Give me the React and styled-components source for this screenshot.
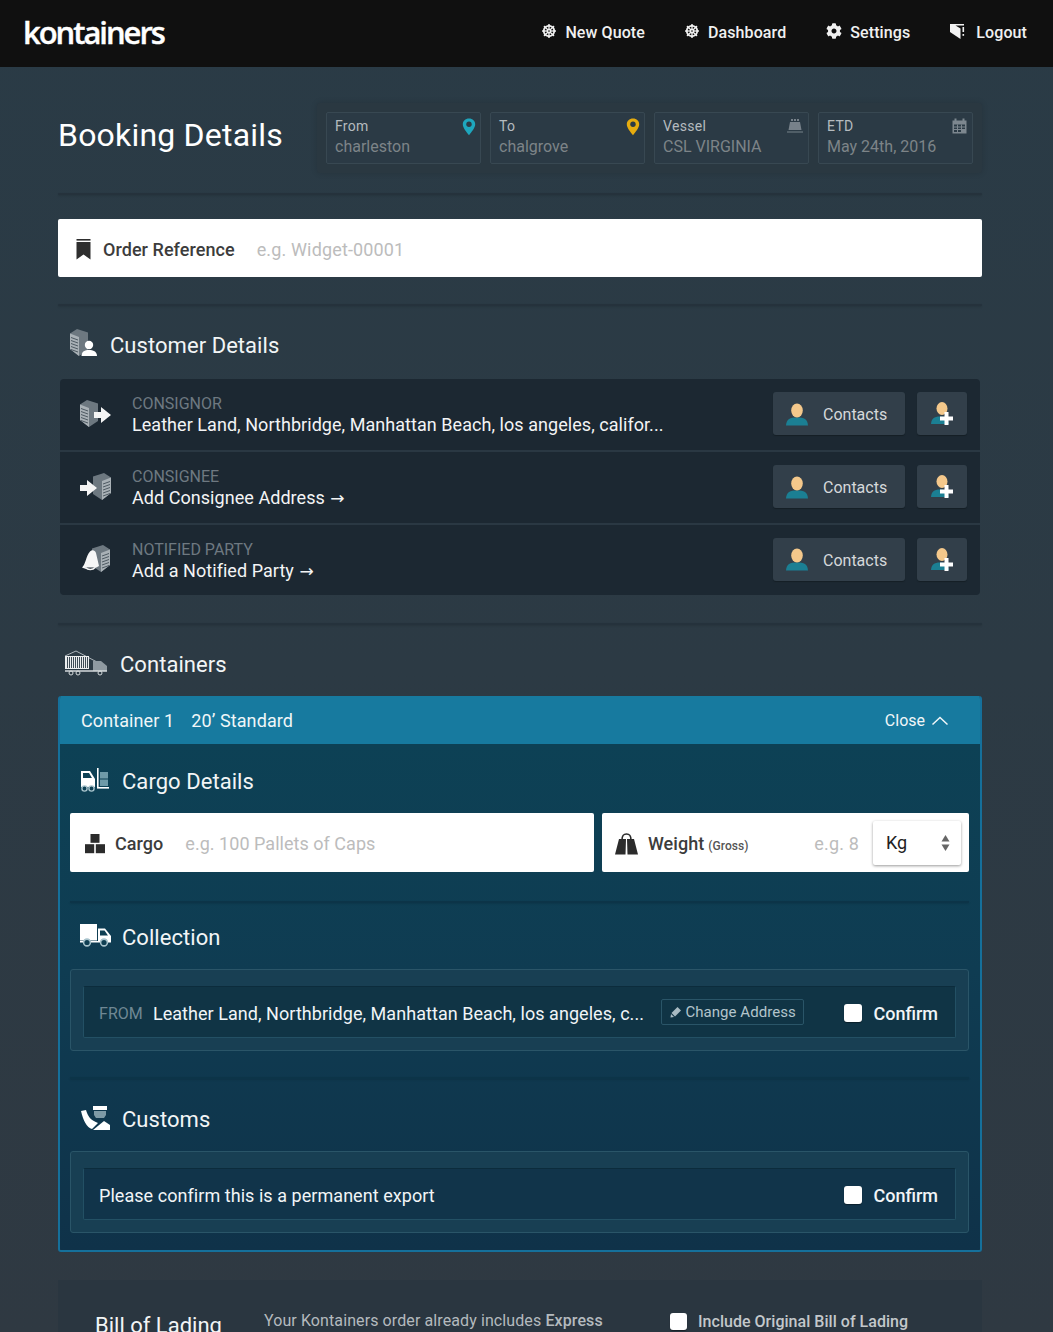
import React from "react";
import styled, { createGlobalStyle } from "styled-components";
import { FaDharmachakra, FaCog } from "react-icons/fa";

const GlobalStyle = createGlobalStyle`
    html, body {
        margin: 0;
        padding: 0;
        height: 100%;
        overflow: hidden;
        background: #2c3a44;
    }
    * {
        box-sizing: border-box;
    }
`

const Page = styled.div`
    width: 1053px;
    height: 1332px;
    overflow: hidden;
    font-family: Roboto, "Liberation Sans", sans-serif;
    background: linear-gradient(180deg, #2a3b46 0%, #2c3a44 50%, #2f3942 100%);
    color: #fff;
`

const TopBar = styled.header`
    height: 67px;
    background: #101010;
    display: flex;
    align-items: center;
    justify-content: space-between;
    padding: 0 26px 3px 23px;
`

const Logo = styled.div`
    font-family: "Open Sans", sans-serif;
    font-size: 31px;
    font-weight: 600;
    letter-spacing: -2.05px;
    color: #fff;
    -webkit-text-stroke: 0.4px #fff;
`

const Nav = styled.nav`
    display: flex;
    gap: 40px;
`

const NavItem = styled.a`
    display: flex;
    align-items: center;
    gap: ${(p) => p.$gap || 9}px;
    font-size: 16px;
    font-weight: 500;
    letter-spacing: 0.1px;
    color: #f0f0f0;
    svg {
        display: block;
        margin-top: -2px;
    }
`

const Main = styled.main`
    padding: 0 71px 0 58px;
`

const Divider = styled.div`
    height: 2px;
    background: #25323c;
    box-shadow: 0 1px 2px rgba(0, 0, 0, 0.12);
    border-radius: 2px;
`

const BookingHead = styled.section`
    height: 126px;
    display: flex;
    align-items: center;
    justify-content: space-between;
    padding-top: 9px;
`

const PageTitle = styled.h1`
    margin: 0;
    font-size: 32px;
    font-weight: 400;
    letter-spacing: 0.2px;
    color: #fff;
`

const SummaryTray = styled.div`
    display: flex;
    gap: 9px;
    padding: 9px;
    margin-top: 6px;
    background: #2a3841;
    border-radius: 3px;
    box-shadow: 0 0 6px rgba(0, 0, 0, 0.14);
`

const SummaryField = styled.div`
    position: relative;
    width: 155px;
    height: 52px;
    padding: 5px 8px;
    background: #2b3a45;
    border: 1px solid #384852;
    border-radius: 2px;
`

const SummaryLabel = styled.div`
    font-size: 14px;
    line-height: 16px;
    letter-spacing: 0.3px;
    color: #b5bbbf;
`

const SummaryValue = styled.div`
    margin-top: 2px;
    font-size: 16px;
    line-height: 22px;
    color: #7d8488;
`

const SummaryIcon = styled.span`
    position: absolute;
    top: 5px;
    right: ${(p) => p.$right}px;
    display: block;
    line-height: 0;
`

const WhiteField = styled.div`
    flex: ${(p) => p.$flex || "none"};
    width: ${(p) => (p.$w ? `${p.$w}px` : "auto")};
    height: ${(p) => p.$h || 59}px;
    background: #fff;
    border-radius: 2px;
    display: flex;
    align-items: center;
    padding: 2px ${(p) => p.$pr || 0}px 0 ${(p) => p.$pl || 15}px;
    color: #3a3a3a;
`

const FieldLabel = styled.span`
    margin-left: ${(p) => p.$ml || 10}px;
    font-size: 18px;
    font-weight: 500;
    letter-spacing: 0.05px;
    color: #3c3c3c;
    white-space: nowrap;
    small {
        font-size: 12px;
        margin-left: 4px;
        color: #555;
    }
`

const Placeholder = styled.span`
    margin-left: ${(p) => p.$ml || 22}px;
    font-size: 18px;
    letter-spacing: ${(p) => p.$ls || 0.15}px;
    color: #bcbcbc;
    white-space: nowrap;
`

const SectionHead = styled.div`
    display: flex;
    align-items: center;
    height: ${(p) => p.$h}px;
    padding: ${(p) => p.$pt || 0}px 0 0 ${(p) => p.$pl || 10}px;
`

const SectionTitle = styled.h2`
    margin: 0 0 0 ${(p) => p.$ml || 13}px;
    padding-top: 4px;
    font-size: 22px;
    font-weight: 400;
    letter-spacing: 0.05px;
    color: #f2f5f6;
`

const PartyPanel = styled.div`
    margin: 0 2px;
    background: #1c2832;
    border-radius: 4px;
    overflow: hidden;
`

const PartyText = styled.div`
    flex: 1;
    margin-left: 18px;
    min-width: 0;
`

const PartyRow = styled.div`
    height: 71px;
    display: flex;
    align-items: center;
    padding: 0 13px 0 18px;
    & + & {
        height: 73px;
        border-top: 2px solid #2a3843;
    }
    &:last-child {
        height: 72px;
    }
    &:last-child ${PartyText} {
        padding-top: 2px;
    }
`

const PartyIcon = styled.span`
    width: 36px;
    display: flex;
    justify-content: center;
    flex: none;
`

const PartyLabel = styled.div`
    font-size: 16px;
    line-height: 20px;
    color: #6e7981;
`

const PartyValue = styled.div`
    font-size: 18px;
    line-height: 22px;
    letter-spacing: 0.05px;
    color: #f3f4f5;
    white-space: nowrap;
`

const ArrowGlyph = styled.span`
    font-family: "DejaVu Sans", sans-serif;
    font-size: 17px;
`

const ContactButton = styled.button`
    width: 132px;
    height: 43px;
    margin-top: -2px;
    padding: 0 0 0 12px;
    background: #323f4a;
    border: none;
    border-radius: 3px;
    display: flex;
    align-items: center;
    gap: 14px;
    font-family: inherit;
    font-size: 16px;
    color: #d5d8da;
    box-shadow: 0 1px 1px rgba(0, 0, 0, 0.25);
`

const ContactLabel = styled.span`
    padding-top: 2px;
`

const AddButton = styled(ContactButton)`
    width: 50px;
    margin-left: 12px;
    padding: 0 0 0 13px;
`

const ContainerCard = styled.section`
    border-radius: 3px;
    overflow: hidden;
    border: 2px solid #15709b;
    border-top: none;
`

const ContainerBar = styled.div`
    height: 48px;
    margin: 0 -2px;
    background: #177a9f;
    display: flex;
    align-items: center;
    justify-content: space-between;
    padding: 0 33px 0 23px;
    font-size: 18px;
    letter-spacing: 0.1px;
    color: #f0f6f8;
`

const BarTitle = styled.div`
    display: flex;
    gap: 17px;
`

const CloseLink = styled.div`
    display: flex;
    align-items: center;
    gap: 6px;
    font-size: 16px;
    letter-spacing: 0;
`

const ContainerBody = styled.div`
    height: 506px;
    padding: 0 11px 0 10px;
    background: linear-gradient(180deg, #0d4155 0%, #0f3c52 45%, #0f3249 100%);
`

const FieldRow = styled.div`
    display: flex;
    gap: 8px;
`

const UnitSelect = styled.div`
    width: 88px;
    height: 44px;
    margin: -2px 0 0 14px;
    padding: 0 11px 0 13px;
    display: flex;
    align-items: center;
    justify-content: space-between;
    background: #fff;
    border-radius: 2px;
    box-shadow: 0 1px 3px rgba(0, 0, 0, 0.4);
    font-size: 18px;
    color: #222;
`

const InnerDivider = styled.div`
    height: 2px;
    margin-top: ${(p) => p.$mt}px;
    background: #0c3448;
    box-shadow: 0 1px 2px rgba(0, 0, 0, 0.12);
`

const ConfirmBox = styled.div`
    height: 82px;
    margin-top: 1px;
    padding: 16px 12px 12px;
    background: #183f53;
    border: 1px solid #2a5568;
    border-radius: 3px;
`

const ConfirmInner = styled.div`
    height: 52px;
    display: flex;
    align-items: center;
    padding: 2px 17px 0 15px;
    background: ${(p) => p.$bg || "#103445"};
    border: 1px solid #235064;
    border-top-color: #0c2c3c;
    border-radius: 2px;
    font-size: 18px;
    letter-spacing: 0.05px;
    color: #f1f5f7;
    white-space: nowrap;
`

const FromTag = styled.span`
    font-size: 16px;
    color: #6f8894;
    margin-right: 10px;
`

const Grow = styled.span`
    flex: 1;
`

const ChangeButton = styled.span`
    width: 143px;
    height: 26px;
    margin: -2px 40px 0 0;
    display: flex;
    align-items: center;
    gap: 3px;
    padding-left: 8px;
    font-size: 15px;
    letter-spacing: 0.05px;
    color: #b3c4cc;
    border: 1px solid #2a5568;
    border-radius: 2px;
`

const CheckBox = styled.span`
    display: block;
    flex: none;
    width: ${(p) => p.$size || 18}px;
    height: ${(p) => p.$size || 18}px;
    background: #fff;
    border-radius: 3px;
    box-shadow: 0 1px 1px rgba(0, 0, 0, 0.4);
`

const ConfirmLabel = styled.span`
    margin-left: 11px;
    font-weight: 500;
    font-size: 18px;
    letter-spacing: 0;
`

const BillPanel = styled.section`
    height: 60px;
    margin-top: 28px;
    padding: 29px 0 0 37px;
    display: flex;
    align-items: flex-start;
    background: #2a3640;
`

const BillTitle = styled.h3`
    width: 169px;
    margin: 4px 0 0;
    font-size: 22px;
    font-weight: 400;
    color: #f2f4f5;
`

const BillText = styled.div`
    width: 406px;
    font-size: 16px;
    line-height: 24px;
    letter-spacing: 0.1px;
    color: #b4babe;
    b {
        font-weight: 500;
    }
`

const BillOption = styled.div`
    display: flex;
    align-items: center;
    gap: 11px;
    height: 24px;
    font-size: 16px;
    font-weight: 500;
    letter-spacing: 0.03px;
    color: #c3c8cb;
`

const OrderWrap = styled.div`
    padding: 24px 0 27px;
`

const SectionGap = styled.div`
    height: 28px;
`

const Pin = ({ color, dot }) => (
  <svg width="14" height="18" viewBox="0 0 14 18">
    <path d="M7 0.5C3.3 0.5 0.8 3 0.8 6.3 0.8 10 4.6 14 7 17.3 9.4 14 13.2 10 13.2 6.3 13.2 3 10.7 0.5 7 0.5Z" fill={color} />
    <circle cx="7" cy="6.2" r="2.7" fill={dot} />
  </svg>
);

const ShipIcon = () => (
  <svg width="16" height="16" viewBox="0 0 16 16" fill="#77818a">
    <rect x="4" y="1" width="2" height="2" />
    <rect x="7" y="1" width="2" height="2" />
    <rect x="10" y="1" width="2" height="2" />
    <path d="M3 4H13L14.5 12H1.5Z" />
    <rect x="0" y="13.5" width="16" height="1" />
  </svg>
);

const CalendarIcon = () => (
  <svg width="15" height="16" viewBox="0 0 15 16" fill="none">
    <path d="M0.5 2.5H14.5V15.5H0.5Z" fill="#7d878f" />
    <rect x="2.5" y="0.5" width="2" height="3" fill="#7d878f" />
    <rect x="10.5" y="0.5" width="2" height="3" fill="#7d878f" />
    <path d="M2 6.5H13V14H2Z" fill="#2b3a45" />
    <path d="M2 9H13M2 11.5H13M5.5 6.5V14M9.5 6.5V14" stroke="#7d878f" strokeWidth="1" />
    <rect x="10" y="12" width="3" height="2" fill="#7d878f" />
  </svg>
);

const LogoutIcon = () => (
  <svg width="15" height="16" viewBox="0 0 15 16">
    <path d="M0 1H14V2.5H5.5L10.5 5.5V16L0 9Z" fill="#f2f2f2" />
    <rect x="12.5" y="4" width="1.6" height="5" fill="#f2f2f2" />
    <rect x="12.5" y="11" width="1.6" height="1.8" fill="#f2f2f2" />
  </svg>
);

const BookmarkIcon = () => (
  <svg width="15" height="21" viewBox="0 0 15 21" fill="#2e2e2e">
    <rect x="0.5" y="0" width="14" height="1.6" />
    <path d="M0.5 3H14.5V20.5L7.5 15.5 0.5 20.5Z" />
  </svg>
);

// isometric office block shared by the customer icons
const Tower = ({ x = 0, y = 0, flip }) => (
  <g transform={`translate(${x} ${y})${flip ? " translate(18 0) scale(-1 1)" : ""}`}>
    <path d="M0 4.5 7 0 18 3.5V21L9 27 0 20Z" fill="#6d7880" />
    <path d="M0 4.5 9 8V27L0 20Z" fill="#a9b1b6" />
    <path d="M1 8.5 8 11M1 11.5 8 14M1 14.5 8 17M1 17.5 8 20M1 20.5 8 23" stroke="#4d5962" strokeWidth="1" />
  </g>
);

const CustomerIcon = () => (
  <svg width="28" height="30" viewBox="0 0 28 30">
    <Tower />
    <circle cx="19" cy="16" r="4.2" fill="#fff" />
    <path d="M11.5 27C11.5 22.5 15 21 19 21S27 22.5 27 27Z" fill="#fff" />
  </svg>
);

const ConsignorIcon = () => (
  <svg width="32" height="30" viewBox="0 0 32 30">
    <Tower />
    <path d="M14 12H21V7L31 15 21 23V18H14Z" fill="#f4f4f4" />
  </svg>
);

const ConsigneeIcon = () => (
  <svg width="32" height="30" viewBox="0 0 32 30">
    <Tower x={13} flip />
    <path d="M0 12H7V7L17 15 7 23V18H0Z" fill="#f4f4f4" />
  </svg>
);

const NotifyIcon = () => (
  <svg width="30" height="30" viewBox="0 0 30 30">
    <Tower x={11} flip />
    <path d="M9 6.5C11 4.5 14 5 15 8L18 21C13 24.5 7 25 1 22.5 5 19 4.5 12 9 6.5Z" fill="#f6f6f6" />
    <path d="M4.5 22.5C7 25.5 12 25 14 22.5" fill="#1c2832" stroke="#f6f6f6" strokeWidth="1.4" />
  </svg>
);

const ContactFace = () => (
  <svg width="24" height="24" viewBox="0 0 24 24">
    <path d="M1 23.5C1.5 17 5 15.5 12 15.5S22.5 17 23 23.5Z" fill="#1b7f93" />
    <ellipse cx="12" cy="8.5" rx="5.8" ry="7" fill="#f4c88b" />
  </svg>
);

const ContactAdd = () => (
  <svg width="25" height="25" viewBox="0 0 25 25">
    <path d="M1 23C1.5 17.5 4 15.5 10 15.5S18 17.5 19 23Z" fill="#1b7f93" />
    <ellipse cx="12" cy="7.5" rx="5.5" ry="6.5" fill="#f4c88b" />
    <path d="M14.5 11H18.5V15.5H23V19.5H18.5V24H14.5V19.5H10V15.5H14.5Z" fill="#fff" />
  </svg>
);

const TrainIcon = () => (
  <svg width="44" height="26" viewBox="0 0 44 26" fill="none">
    <path d="M1 6 12 1 33 12" stroke="#aeb6bb" strokeWidth="1" />
    <rect x="1" y="6" width="24" height="13" fill="#eceeef" />
    <path d="M3.5 7V18M5.5 7V18M7.5 7V18M9.5 7V18M11.5 7V18M13.5 7V18M15.5 7V18M17.5 7V18M19.5 7V18M21.5 7V18M23.5 7V18" stroke="#3d4b55" strokeWidth="1" />
    <path d="M29 11H37L43 16V21H29Z" fill="#8f9aa1" />
    <path d="M1 21H43" stroke="#d5dadc" strokeWidth="1.5" />
    <circle cx="7" cy="23" r="2" stroke="#d5dadc" />
    <circle cx="14" cy="23" r="2" stroke="#d5dadc" />
    <circle cx="36" cy="23" r="2" stroke="#d5dadc" />
  </svg>
);

const ForkliftIcon = () => (
  <svg width="29" height="24" viewBox="0 0 29 24" fill="none">
    <path d="M1 3H10L15 11V19H1Z" fill="#fff" />
    <path d="M3 5H9L12 10H3Z" fill="#0e4155" />
    <rect x="17" y="0" width="1.6" height="20" fill="#fff" />
    <rect x="17" y="19" width="12" height="1.6" fill="#fff" />
    <rect x="20" y="4" width="8" height="6.5" fill="#6f9aa8" />
    <rect x="20" y="11.5" width="8" height="6.5" fill="#6f9aa8" />
    <circle cx="4.5" cy="20.5" r="2.6" fill="#0e4155" stroke="#a8c3cc" strokeWidth="1.4" />
    <circle cx="11.5" cy="20.5" r="2.6" fill="#0e4155" stroke="#a8c3cc" strokeWidth="1.4" />
  </svg>
);

const TruckIcon = () => (
  <svg width="31" height="23" viewBox="0 0 31 23">
    <rect x="0" y="0" width="17" height="16.5" fill="#fff" />
    <path d="M18 4.5H25L31 12V18H18Z" fill="#fff" />
    <path d="M20 6.5H24.5L28 11.5H20Z" fill="#0f3f53" />
    <rect x="0" y="17" width="31" height="1.5" fill="#fff" />
    <circle cx="7" cy="18.5" r="3.4" fill="#0f3f53" stroke="#a8c3cc" strokeWidth="1.6" />
    <circle cx="24" cy="18.5" r="3.4" fill="#0f3f53" stroke="#a8c3cc" strokeWidth="1.6" />
  </svg>
);

const CustomsIcon = () => (
  <svg width="30" height="24" viewBox="0 0 30 24">
    <rect x="13" y="0" width="14" height="4" fill="#fff" />
    <path d="M14 5H26V9L24 12H16L14 9Z" fill="#7e9aa6" />
    <path d="M1 5 6 4C8 10 10 14 18 17L12 23C7 22 3 14 1 5Z" fill="#fff" />
    <path d="M13 24 24 15 30 19V24Z" fill="#fff" />
  </svg>
);

const CargoIcon = () => (
  <svg width="20" height="20" viewBox="0 0 20 20" fill="#2b2b2b">
    <rect x="5.5" y="0" width="9" height="8.8" />
    <rect x="0" y="10.2" width="9.2" height="9" />
    <rect x="10.8" y="10.2" width="9.2" height="9" />
  </svg>
);

const WeightIcon = () => (
  <svg width="23" height="22" viewBox="0 0 23 22">
    <path d="M7 7C7 2 8.5 1 11.5 1S16 2 16 7" fill="none" stroke="#2b2b2b" strokeWidth="1.6" />
    <path d="M4 6H11L10.5 21.5H0ZM12 6H19L23 21.5H12.5Z" fill="#2b2b2b" />
  </svg>
);

const SelectArrows = () => (
  <svg width="9" height="18" viewBox="0 0 9 18" fill="#666">
    <path d="M4.5 1 8.5 7.5H0.5Z" />
    <path d="M4.5 17 8.5 10.5H0.5Z" />
  </svg>
);

const ChevronUp = () => (
  <svg width="18" height="11" viewBox="0 0 18 11" fill="none">
    <path d="M1.5 9.5 9 2.5 16.5 9.5" stroke="#f0f6f8" strokeWidth="1.5" />
  </svg>
);

const PencilIcon = () => (
  <svg width="12" height="12" viewBox="0 0 12 12" fill="#a9bbc3">
    <path d="M7.5 1 11 4.5 5 10.5 1.5 7Z" />
    <path d="M1 8 4 11 0.5 11.5Z" />
  </svg>
);

const parties = [
  { label: "CONSIGNOR", value: "Leather Land, Northbridge, Manhattan Beach, los angeles, califor...", icon: <ConsignorIcon /> },
  { label: "CONSIGNEE", value: "Add Consignee Address", arrow: true, icon: <ConsigneeIcon /> },
  { label: "NOTIFIED PARTY", value: "Add a Notified Party", arrow: true, icon: <NotifyIcon /> },
];

export default function App() {
  return (
    <Page>
      <GlobalStyle />
      <TopBar>
        <Logo>kontainers</Logo>
        <Nav>
          <NavItem><FaDharmachakra size={14} />New Quote</NavItem>
          <NavItem><FaDharmachakra size={14} />Dashboard</NavItem>
          <NavItem $gap={8}><FaCog size={16} />Settings</NavItem>
          <NavItem $gap={11}><LogoutIcon />Logout</NavItem>
        </Nav>
      </TopBar>

      <Main>
        <BookingHead>
          <PageTitle>Booking Details</PageTitle>
          <SummaryTray>
            <SummaryField>
              <SummaryLabel>From</SummaryLabel>
              <SummaryValue>charleston</SummaryValue>
              <SummaryIcon $right={4}><Pin color="#1ea6bd" dot="#2b3a45" /></SummaryIcon>
            </SummaryField>
            <SummaryField>
              <SummaryLabel>To</SummaryLabel>
              <SummaryValue>chalgrove</SummaryValue>
              <SummaryIcon $right={4}><Pin color="#e6ac0f" dot="#2b3a45" /></SummaryIcon>
            </SummaryField>
            <SummaryField>
              <SummaryLabel>Vessel</SummaryLabel>
              <SummaryValue>CSL VIRGINIA</SummaryValue>
              <SummaryIcon $right={5}><ShipIcon /></SummaryIcon>
            </SummaryField>
            <SummaryField>
              <SummaryLabel>ETD</SummaryLabel>
              <SummaryValue>May 24th, 2016</SummaryValue>
              <SummaryIcon $right={5}><CalendarIcon /></SummaryIcon>
            </SummaryField>
          </SummaryTray>
        </BookingHead>

        <Divider />
        <OrderWrap>
          <WhiteField $h={58} $pl={18}>
            <BookmarkIcon />
            <FieldLabel $ml={12}>Order Reference</FieldLabel>
            <Placeholder $ml={22}>e.g. Widget-00001</Placeholder>
          </WhiteField>
        </OrderWrap>
        <Divider />
        <SectionHead $h={73} $pt={2} $pl={12}>
          <CustomerIcon />
          <SectionTitle $ml={12}>Customer Details</SectionTitle>
        </SectionHead>

        <PartyPanel>
          {parties.map((party) => (
            <PartyRow key={party.label}>
              <PartyIcon>{party.icon}</PartyIcon>
              <PartyText>
                <PartyLabel>{party.label}</PartyLabel>
                <PartyValue>
                  {party.value}
                  {party.arrow && <ArrowGlyph> →</ArrowGlyph>}
                </PartyValue>
              </PartyText>
              <ContactButton><ContactFace /><ContactLabel>Contacts</ContactLabel></ContactButton>
              <AddButton><ContactAdd /></AddButton>
            </PartyRow>
          ))}
        </PartyPanel>

        <SectionGap />
        <Divider />
        <SectionHead $h={71} $pt={4} $pl={6}>
          <TrainIcon />
          <SectionTitle $ml={12}>Containers</SectionTitle>
        </SectionHead>

        <ContainerCard>
          <ContainerBar>
            <BarTitle>
              <span>Container 1</span>
              <span>20’ Standard</span>
            </BarTitle>
            <CloseLink>Close <ChevronUp /></CloseLink>
          </ContainerBar>
          <ContainerBody>
            <SectionHead $h={69} $pt={2}>
              <ForkliftIcon />
              <SectionTitle>Cargo Details</SectionTitle>
            </SectionHead>
            <FieldRow>
              <WhiteField $w={524}>
                <CargoIcon />
                <FieldLabel>Cargo</FieldLabel>
                <Placeholder $ls={0.03}>e.g. 100 Pallets of Caps</Placeholder>
              </WhiteField>
              <WhiteField $flex="1" $pl={13} $pr={8}>
                <WeightIcon />
                <FieldLabel>Weight<small>(Gross)</small></FieldLabel>
                <Grow />
                <Placeholder>e.g. 8</Placeholder>
                <UnitSelect>Kg<SelectArrows /></UnitSelect>
              </WhiteField>
            </FieldRow>

            <InnerDivider $mt={29} />
            <SectionHead $h={65}>
              <TruckIcon />
              <SectionTitle $ml={11}>Collection</SectionTitle>
            </SectionHead>
            <ConfirmBox>
              <ConfirmInner>
                <FromTag>FROM</FromTag>
                Leather Land, Northbridge, Manhattan Beach, los angeles, c...
                <Grow />
                <ChangeButton><PencilIcon />Change Address</ChangeButton>
                <CheckBox />
                <ConfirmLabel>Confirm</ConfirmLabel>
              </ConfirmInner>
            </ConfirmBox>

            <InnerDivider $mt={26} />
            <SectionHead $h={71} $pt={6}>
              <CustomsIcon />
              <SectionTitle $ml={12}>Customs</SectionTitle>
            </SectionHead>
            <ConfirmBox>
              <ConfirmInner $bg="#11344a">
                Please confirm this is a permanent export
                <Grow />
                <CheckBox />
                <ConfirmLabel>Confirm</ConfirmLabel>
              </ConfirmInner>
            </ConfirmBox>
          </ContainerBody>
        </ContainerCard>

        <BillPanel>
          <BillTitle>Bill of Lading</BillTitle>
          <BillText>Your Kontainers order already includes <b>Express</b></BillText>
          <BillOption><CheckBox $size={17} />Include Original Bill of Lading</BillOption>
        </BillPanel>
      </Main>
    </Page>
  );
}
